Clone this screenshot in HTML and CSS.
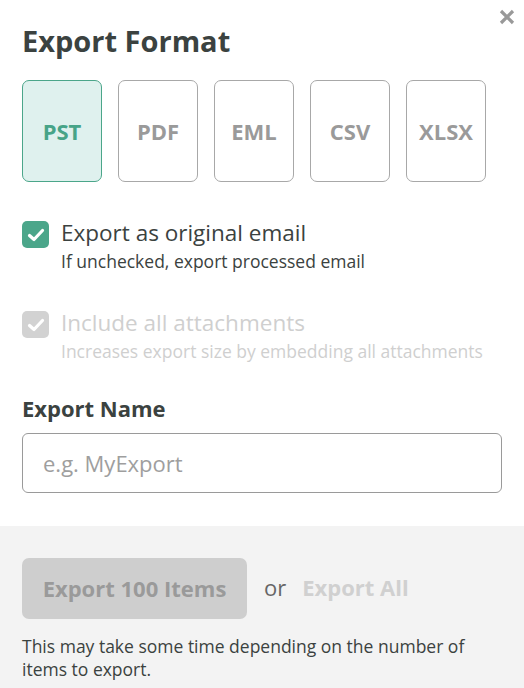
FILE: index.html
```html
<!DOCTYPE html>
<html lang="en">
<head>
    <meta charset="UTF-8">
    <meta name="viewport" content="width=device-width, initial-scale=1.0">
    <title>Export</title>
    <link rel="stylesheet" href="styles.css">
</head>
<body>
  <div class="dialog">
    <div class="body">
      <button class="close" aria-label="Close">
        <svg width="16" height="16" viewBox="0 0 16 16"><path d="M2 2L14 14M14 2L2 14" stroke="#999" stroke-width="3.2" stroke-linecap="butt"/></svg>
      </button>
      <h1>Export Format</h1>

      <div class="formats">
        <button class="format active">PST</button>
        <button class="format">PDF</button>
        <button class="format">EML</button>
        <button class="format">CSV</button>
        <button class="format">XLSX</button>
      </div>

      <label class="option">
        <span class="check on">
          <svg width="18" height="14" viewBox="0 0 18 14"><path d="M2.5 7.5L7 11.5L15.5 2.5" fill="none" stroke="#fff" stroke-width="3.2" stroke-linecap="round" stroke-linejoin="round"/></svg>
        </span>
        <span class="text">
          <span class="title">Export as original email</span>
          <span class="hint">If unchecked, export processed email</span>
        </span>
      </label>

      <label class="option disabled">
        <span class="check">
          <svg width="18" height="14" viewBox="0 0 18 14"><path d="M2.5 7.5L7 11.5L15.5 2.5" fill="none" stroke="#fff" stroke-width="3.2" stroke-linecap="round" stroke-linejoin="round"/></svg>
        </span>
        <span class="text">
          <span class="title">Include all attachments</span>
          <span class="hint">Increases export size by embedding all attachments</span>
        </span>
      </label>

      <label class="name-label" for="exportName">Export Name</label>
      <input type="text" id="exportName" placeholder="e.g. MyExport">
    </div>

    <div class="footer">
      <div class="actions">
        <button class="export" disabled>Export 100 Items</button>
        <span class="or">or</span>
        <span class="all">Export All</span>
      </div>
      <p class="note">This may take some time depending on the number of items to export.</p>
    </div>
  </div>
</body>
</html>
```

FILE: styles.css
```css
* {
    box-sizing: border-box;
}

body {
    margin: 0;
    font-family: "Open Sans", "Noto Sans", sans-serif;
    color: #3b4240;
    background: #fff;
}

.dialog {
    width: 524px;
    height: 688px;
    display: flex;
    flex-direction: column;
    overflow: hidden;
}

.body {
    position: relative;
    padding: 21px 22px 33px 22px;
}

.close {
    position: absolute;
    top: 9px;
    right: 9px;
    border: none;
    background: none;
    padding: 0;
    width: 16px;
    height: 16px;
    cursor: pointer;
}

h1 {
    margin: 0;
    font-size: 29px;
    font-weight: 700;
    line-height: 40px;
    color: #3b4240;
}

.formats {
    display: flex;
    gap: 16px;
    margin-top: 19px;
}

.format {
    width: 80px;
    height: 102px;
    border: 1px solid #a8a8a8;
    border-radius: 7px;
    background: #fff;
    font-family: inherit;
    font-size: 22px;
    font-weight: 700;
    color: #9a9a9a;
    cursor: pointer;
}

.format.active {
    border-color: #4ba68a;
    background: #dff1ee;
    color: #47a488;
}

.option {
    display: flex;
    gap: 12px;
    margin-top: 39px;
}

.option + .option {
    margin-top: 38px;
}

.check {
    flex: none;
    width: 27px;
    height: 27px;
    border-radius: 5px;
    background: #d2d2d2;
    display: flex;
    align-items: center;
    justify-content: center;
}

.check.on {
    background: #4ba68a;
}

.text {
    display: flex;
    flex-direction: column;
}

.title {
    font-size: 22.5px;
    line-height: 29px;
    margin-top: -3px;
    color: #3b4240;
}

.hint {
    font-size: 17.5px;
    line-height: 24px;
    margin-top: 2px;
    color: #3b4240;
}

.disabled .title,
.disabled .hint {
    color: #cfcfcf;
}

.name-label {
    display: block;
    margin-top: 30px;
    font-size: 22px;
    font-weight: 700;
    line-height: 30px;
}

input[type="text"] {
    display: block;
    width: 480px;
    height: 60px;
    margin-top: 10px;
    padding: 0 20px;
    border: 1px solid #9a9a9a;
    border-radius: 6px;
    font-family: inherit;
    font-size: 22px;
    color: #3b4240;
}

input::placeholder {
    color: #9e9e9e;
}

.footer {
    flex: 1;
    background: #f3f3f3;
    padding: 32px 22px 0 22px;
}

.actions {
    display: flex;
    align-items: center;
}

.export {
    width: 225px;
    height: 61px;
    border: none;
    border-radius: 7px;
    background: #cecece;
    font-family: inherit;
    font-size: 22px;
    font-weight: 700;
    color: #9a9a9a;
    padding-bottom: 3px;
}

.or {
    margin-left: 17px;
    font-size: 22px;
    color: #666;
    margin-bottom: 3px;
}

.all {
    margin-left: 16px;
    font-size: 22px;
    font-weight: 700;
    color: #d0d0d0;
    margin-bottom: 3px;
}

.note {
    margin: 16px 0 0 0;
    font-size: 17.5px;
    line-height: 23px;
    color: #3b4240;
}
```
